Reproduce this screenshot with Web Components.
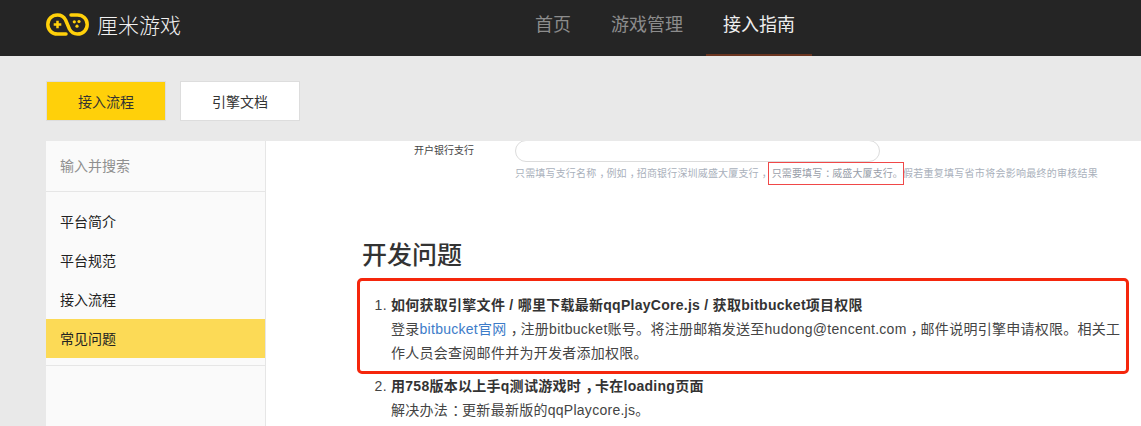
<!DOCTYPE html>
<html lang="zh-CN">
<head>
<meta charset="utf-8">
<title>接入指南</title>
<style>
  html, body { margin: 0; height: 100%; }
  body {
    height: 426px;
    overflow: hidden;
    background: #e9e9e9;
    font-family: "Liberation Sans", "Noto Sans CJK SC", sans-serif;
    color: #333;
  }
</style>
</head>
<body>
<site-header></site-header>
<page-tabs></page-tabs>
<doc-layout>
  <side-menu slot="side"></side-menu>
  <doc-content></doc-content>
</doc-layout>

<script>
// top bar with logo and main nav
class SiteHeader extends HTMLElement {
  constructor() {
    super();
    const shadow = this.attachShadow({ mode: "open" });
    shadow.innerHTML = `
      <style>
        :host { display: flex; height: 56px; background: #252525; padding-left: 46px; box-sizing: border-box; }
        .logo { display: flex; align-items: center; gap: 8px; width: 472px; padding-bottom: 8px; box-sizing: border-box; }
        .logo svg { display: block; }
        .logo span { color: #f2f2f2; font-size: 21px; font-weight: 300; }
        nav { display: flex; gap: 6px; }
        nav a { display: block; box-sizing: border-box; height: 56px; padding: 0 17px; line-height: 50px; font-size: 18px; color: #8c8c8c; white-space: nowrap; }
        nav a.on { color: #eee; border-bottom: 2px solid #6b3520; }
      </style>
      <div class="logo">
        <svg width="43" height="23" viewBox="0 0 43 23" fill="none">
          <path d="M20 21 H11.5 C5.7 21 1.8 16.6 1.8 11.5 C1.8 6.4 5.7 2 11.5 2 C15.5 2 18 4 19.6 7 L23.4 16 C25 19 27.5 21 31.5 21 C37.3 21 41.2 16.6 41.2 11.5 C41.2 6.4 37.3 2 31.5 2 H25" stroke="#ffd00a" stroke-width="3.5" stroke-linecap="round"/>
          <path d="M7.7 11.5 H15.3 M11.5 7.7 V15.3" stroke="#ffd00a" stroke-width="2.5"/>
          <circle cx="33" cy="8.5" r="1.6" fill="#ffd00a"/>
          <circle cx="28.3" cy="8.8" r="1.6" fill="#ffd00a"/>
          <circle cx="31" cy="13.2" r="1.6" fill="#ffd00a"/>
        </svg>
        <span>厘米游戏</span>
      </div>
      <nav>
        <a>首页</a>
        <a>游戏管理</a>
        <a class="on">接入指南</a>
      </nav>
    `;
  }
}
customElements.define("site-header", SiteHeader);

class PageTabs extends HTMLElement {
  constructor() {
    super();
    const shadow = this.attachShadow({ mode: "open" });
    shadow.innerHTML = `
      <style>
        :host { display: flex; gap: 14px; padding: 25px 0 20px 46px; }
        div { width: 120px; height: 40px; box-sizing: border-box; border: 1px solid #ddd; background: #fff; color: #333; font-size: 14px; line-height: 40px; text-align: center; }
        .on { background: #ffd00a; }
      </style>
      <div class="on">接入流程</div>
      <div>引擎文档</div>
    `;
  }
}
customElements.define("page-tabs", PageTabs);

class DocLayout extends HTMLElement {
  constructor() {
    super();
    const shadow = this.attachShadow({ mode: "open" });
    shadow.innerHTML = `
      <style>
        :host { display: flex; padding-left: 46px; height: 285px; }
        ::slotted(side-menu) { flex: 0 0 220px; }
      </style>
      <slot name="side"></slot>
      <slot></slot>
    `;
  }
}
customElements.define("doc-layout", DocLayout);

class SideMenu extends HTMLElement {
  constructor() {
    super();
    const shadow = this.attachShadow({ mode: "open" });
    shadow.innerHTML = `
      <style>
        :host { display: block; box-sizing: border-box; background: #fafafa; border-right: 1px solid #e6e6e6; font-size: 14px; }
        .search { height: 51px; box-sizing: border-box; padding-left: 14px; line-height: 50px; color: #8f8f8f; border-bottom: 1px solid #e6e6e6; }
        ul { list-style: none; margin: 0; padding: 10px 0 7px; border-bottom: 1px solid #e6e6e6; }
        li { height: 39px; line-height: 41px; padding-left: 14px; color: #222; }
        li.on { background: #fcda56; }
      </style>
      <div class="search">输入并搜索</div>
      <ul>
        <li>平台简介</li>
        <li>平台规范</li>
        <li>接入流程</li>
        <li class="on">常见问题</li>
      </ul>
    `;
  }
}
customElements.define("side-menu", SideMenu);

class DocContent extends HTMLElement {
  constructor() {
    super();
    const shadow = this.attachShadow({ mode: "open" });
    shadow.innerHTML = `
      <style>
        :host { display: block; flex: 1; background: #fff; overflow: hidden; position: relative; color: #444; }
        /* full-width punctuation sits in the middle of its cell in the reference */
        .p { padding-left: .3em; letter-spacing: -.3em; }
        .form { display: flex; height: 21px; }
        .form label { width: 249px; padding-right: 41px; box-sizing: border-box; text-align: right; font-size: 10px; line-height: 20px; color: #444; }
        .form div { width: 365px; height: 22px; margin-top: -1px; box-sizing: border-box; border: 1px solid #dcdcdc; border-radius: 11px; background: #fff; }
        .hint { margin: 5px 0 0 249px; font-size: 10px; line-height: 14px; letter-spacing: .17px; color: #a9b0bb; white-space: nowrap; }
        .red { outline: 1px solid #f04848; padding: 5px 0 5px 3px; letter-spacing: .1px; color: #979da8; }
        .tail { letter-spacing: .27px; }
        h1 { margin: 58px 0 0 96px; font-size: 25px; line-height: 32px; font-weight: 500; color: #333; }
        ol { margin: 22px 0 0; padding: 0 0 0 125px; font-size: 14px; line-height: 24px; letter-spacing: .27px; width: 734px; }
        li { margin-bottom: 9px; }
        li b { color: #333; }
        a { color: #3d7cc9; }
        .mark { position: absolute; left: 91px; top: 137px; width: 772px; height: 96px; box-sizing: border-box; border: 3px solid #f5260c; border-radius: 5px; }
      </style>
      <div class="form"><label>开户银行支行</label><div></div></div>
      <div class="hint">只需填写支行名称<span class="p">，</span>例如<span class="p">，</span>招商银行深圳威盛大厦支行<span class="p">，</span><span class="red">只需要填写<span class="p">：</span>威盛大厦支行。</span><span class="tail">假若重复填写省市将会影响最终的审核结果</span></div>
      <h1>开发问题</h1>
      <ol>
        <li><b>如何获取引擎文件 / 哪里下载最新qqPlayCore.js / 获取bitbucket项目权限</b><br>
        登录<a>bitbucket官网</a><span class="p">，</span>注册bitbucket账号。将注册邮箱发送至hudong@tencent.com<span class="p">，</span>邮件说明引擎申请权限。相关工<br>作人员会查阅邮件并为开发者添加权限。</li>
        <li><b>用758版本以上手q测试游戏时<span class="p">，</span>卡在loading页面</b><br>
        解决办法<span class="p">：</span>更新最新版的qqPlaycore.js。</li>
      </ol>
      <div class="mark"></div>
    `;
  }
}
customElements.define("doc-content", DocContent);
</script>
</body>
</html>
